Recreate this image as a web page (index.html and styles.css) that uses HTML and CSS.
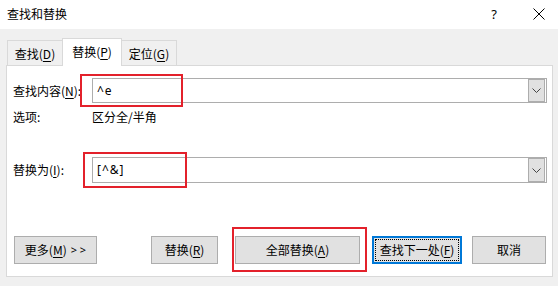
FILE: index.html
```html
<!DOCTYPE html>
<html lang="zh">
<head>
<meta charset="utf-8">
<title>查找和替换</title>
<link rel="stylesheet" href="styles.css">
</head>
<body>
<div class="dialog">
  <div class="titlebar">
    <span class="title">查找和替换</span>
    <span class="help">?</span>
    <svg class="close" width="12" height="12" viewBox="0 0 12 12"><path d="M0.5 0.5L11.5 11.5M11.5 0.5L0.5 11.5" stroke="#000" stroke-width="1" fill="none"/></svg>
  </div>
  <div class="body">
    <div class="tabs">
      <div class="tab t1">查找(<u>D</u>)</div>
      <div class="tab active">替换(<u>P</u>)</div>
      <div class="tab t3">定位(<u>G</u>)</div>
    </div>
    <div class="panel">
      <div class="row find">
        <label class="lbl">查找内容(<u>N</u>):</label>
        <div class="combo">
          <span class="val">^e</span>
          <span class="drop"><svg width="9" height="5" viewBox="0 0 9 5"><path d="M0.5 0.5L4.5 4.5L8.5 0.5" stroke="#444" fill="none"/></svg></span>
        </div>
      </div>
      <div class="row opts">
        <span class="lbl">选项:</span>
        <span class="optval">区分全/半角</span>
      </div>
      <div class="row repl">
        <label class="lbl">替换为(<u>I</u>):</label>
        <div class="combo">
          <span class="val">[^&amp;]</span>
          <span class="drop"><svg width="9" height="5" viewBox="0 0 9 5"><path d="M0.5 0.5L4.5 4.5L8.5 0.5" stroke="#444" fill="none"/></svg></span>
        </div>
      </div>
      <div class="buttons">
        <button class="btn more">更多(<u>M</u>) <span class="arrows">&gt; &gt;</span></button>
        <button class="btn b-repl">替换(<u>R</u>)</button>
        <button class="btn b-all">全部替换(<u>A</u>)</button>
        <button class="btn b-next"><span class="focus">查找下一处(<u>F</u>)</span></button>
        <button class="btn b-cancel">取消</button>
      </div>
    </div>
  </div>
  <div class="mark m1"></div>
  <div class="mark m2"></div>
  <div class="mark m3"></div>
</div>
</body>
</html>
```
FILE: styles.css
```css
* { box-sizing: border-box; }
html, body { margin: 0; padding: 0; }
body {
  width: 558px;
  height: 286px;
  background: #f0f0f0;
  font-family: "Noto Sans CJK SC", "Noto Sans", sans-serif;
  font-size: 12px;
  color: #000;
  overflow: hidden;
}
u { text-decoration: underline; text-underline-offset: 2px; text-decoration-thickness: 1px; }
.dialog { position: relative; width: 558px; height: 286px; }
.titlebar {
  height: 29px;
  background: #fff;
  display: flex;
  align-items: center;
  padding-left: 7px;
}
.title { font-size: 12px; line-height: 16px; margin-top: -1px; }
.help { margin-left: auto; font-size: 13px; line-height: 16px; margin-right: 36px; margin-top: -2px; font-family: "Noto Sans", sans-serif; }
.close { margin-right: 13px; margin-top: -2px; }
.body { padding-top: 9px; }
.tabs {
  display: flex;
  align-items: flex-end;
  height: 27px;
  padding-left: 7px;
}
.tab {
  height: 25px;
  border: 1px solid #d9d9d9;
  border-bottom: none;
  display: flex;
  align-items: center;
  justify-content: center;
  line-height: 16px;
  padding-top: 1px;
}
.t1 { width: 55px; border-right: none; }
.t3 { width: 55px; border-left: none; }
.tab.active {
  width: 60px;
  height: 28px;
  margin-bottom: -1px;
  background: #fff;
  position: relative;
  z-index: 1;
  padding-bottom: 3px;
}
.panel {
  margin-left: 6px;
  width: 547px;
  height: 212px;
  background: #fff;
  border: 1px solid #d9d9d9;
  padding: 12px 5px 12px 0;
}
.row { display: flex; align-items: center; }
.lbl { width: 85px; padding-left: 6px; line-height: 16px; flex: none; }
.combo {
  flex: 1;
  height: 25px;
  border: 1px solid #adadad;
  display: flex;
  align-items: center;
  padding-right: 1px;
}
.repl .combo { height: 26px; }
.val { padding-left: 4px; line-height: 16px; font-family: "Noto Sans", "Noto Sans CJK SC", sans-serif; letter-spacing: 1px; }
.drop {
  margin-left: auto;
  width: 17px;
  height: 23px;
  background: #e1e1e1;
  border: 1px solid #adadad;
  display: flex;
  align-items: center;
  justify-content: center;
}
.repl .drop { height: 24px; }
.opts { margin-top: 6px; height: 16px; }
.optval { line-height: 16px; }
.repl { margin-top: 32px; }
.buttons { display: flex; margin-top: 53px; }
.btn {
  height: 28px;
  background: #e1e1e1;
  border: 1px solid #adadad;
  font-family: inherit;
  font-size: 12px;
  color: #000;
  padding: 0;
  display: flex;
  align-items: center;
  justify-content: center;
  line-height: 16px;
}
.arrows { margin-left: 4px; font-size: 11px; font-family: "Noto Sans", sans-serif; }
.more { margin-left: 7px; width: 83px; }
.b-repl { margin-left: 54px; width: 67px; }
.b-all { margin-left: 17px; width: 125px; }
.b-next { margin-left: 12px; width: 90px; border: 2px solid #0078d7; padding: 1px; }
.focus {
  width: 100%;
  height: 100%;
  border: 1px dotted #000;
  display: flex;
  align-items: center;
  justify-content: center;
}
.b-cancel { margin-left: 10px; width: 74px; }
.mark { position: absolute; border: 2px solid #e3212b; }
.m1 { left: 80px; top: 74px; width: 103px; height: 33px; }
.m2 { left: 83px; top: 152px; width: 104px; height: 36px; }
.m3 { left: 232px; top: 227px; width: 135px; height: 45px; }
```
